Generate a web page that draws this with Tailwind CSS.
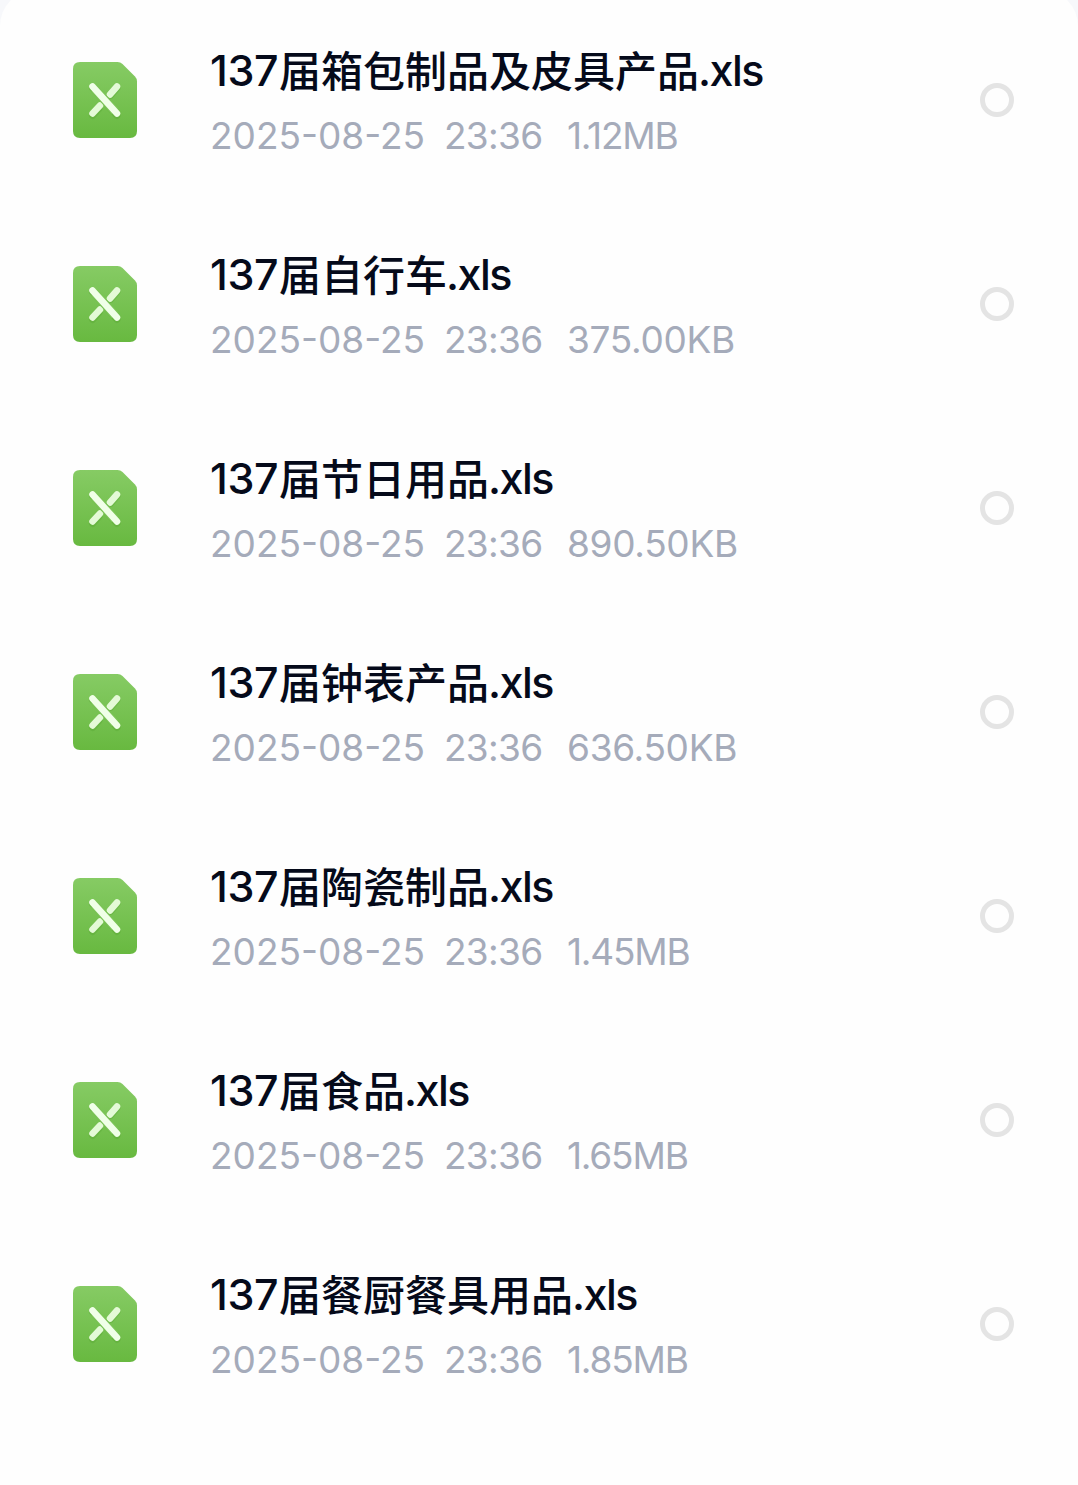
<!DOCTYPE html>
<html lang="zh-CN">
<head>
    <meta charset="UTF-8" />
    <meta name="viewport" content="width=device-width, initial-scale=1" />
    <title>文件列表</title>
    <script src="https://cdn.jsdelivr.net/npm/@tailwindcss/browser@4"></script>
</head>
<body class="bg-[#f7f8fb] font-[Inter,'Noto_Sans_CJK_SC',sans-serif]">

    <!-- Gradiente compartilhado pelos ícones -->
    <svg class="absolute size-0" aria-hidden="true">
        <defs>
            <linearGradient id="sheet" x1="0" y1="0" x2="0" y2="1">
                <stop offset="0" stop-color="#86cb64" />
                <stop offset="1" stop-color="#68b940" />
            </linearGradient>
        </defs>
    </svg>

    <main class="-mt-[10px] h-[1495px] w-full overflow-hidden rounded-t-[36px] bg-[#fefefe] pt-[60px]">
        <ul id="file-list" class="flex flex-col gap-[104px] pr-[64px] pl-[72px]"></ul>
    </main>

    <script>
        const files = [
            { name: '箱包制品及皮具产品', size: '1.12MB' },
            { name: '自行车', size: '375.00KB' },
            { name: '节日用品', size: '890.50KB' },
            { name: '钟表产品', size: '636.50KB' },
            { name: '陶瓷制品', size: '1.45MB' },
            { name: '食品', size: '1.65MB' },
            { name: '餐厨餐具用品', size: '1.85MB' },
        ];

        document.getElementById('file-list').innerHTML = files.map(file => `
            <li class="flex h-[100px] items-center">
                <svg class="h-[78px] w-[66px] shrink-0" viewBox="0 0 66 78" fill="none">
                    <path d="M8 1H45.500Q48.500 1 50.500 3L63 15.500Q65 17.500 65 20.500V70Q65 77 58 77H8Q1 77 1 70V8Q1 1 8 1Z" fill="url(#sheet)" />
                    <g stroke="#4f9f2c" stroke-opacity=".3" stroke-width="7" stroke-linecap="round">
                        <path d="M45 27L38.500 34.500M27 47.500L20.500 54.500" />
                        <path d="M20.500 27L45 54.500" />
                    </g>
                    <path d="M45 25.500L38 33.500M28 44.500L20.500 52.500" stroke="#e4fad7" stroke-width="6.500" stroke-linecap="round" />
                    <path d="M22.500 27.700L43 50.300" stroke="#7cc458" stroke-width="9" />
                    <path d="M20.500 25.500L45 52.500" stroke="#f0ffe8" stroke-width="6.500" stroke-linecap="round" />
                </svg>
                <div class="ml-[72px] flex-1 pt-2 whitespace-nowrap">
                    <p class="flex h-[64px] items-center text-[42px] leading-[64px] font-medium text-[#050a1a]">
                        <span class="w-[69px] pb-[4px] text-[43px] tracking-[-0.4px]">137</span><span>届${file.name}</span><span class="-ml-px pb-[4px] text-[43px] tracking-[-1.5px]">.xls</span>
                    </p>
                    <p class="flex h-[64px] items-center text-[37px] leading-[64px] text-[#a5abba]">
                        <span class="w-[234px]">2025-08-25</span><span class="w-[123px] tracking-[-0.7px]">23:36</span><span class="${file.size.endsWith('MB') ? 'tracking-[-1.2px]' : 'tracking-[-0.3px]'}">${file.size}</span>
                    </p>
                </div>
                <span class="size-[34px] shrink-0 rounded-full border-[5px] border-[#e4e4e4]"></span>
            </li>
        `).join('');
    </script>

</body>
</html>
